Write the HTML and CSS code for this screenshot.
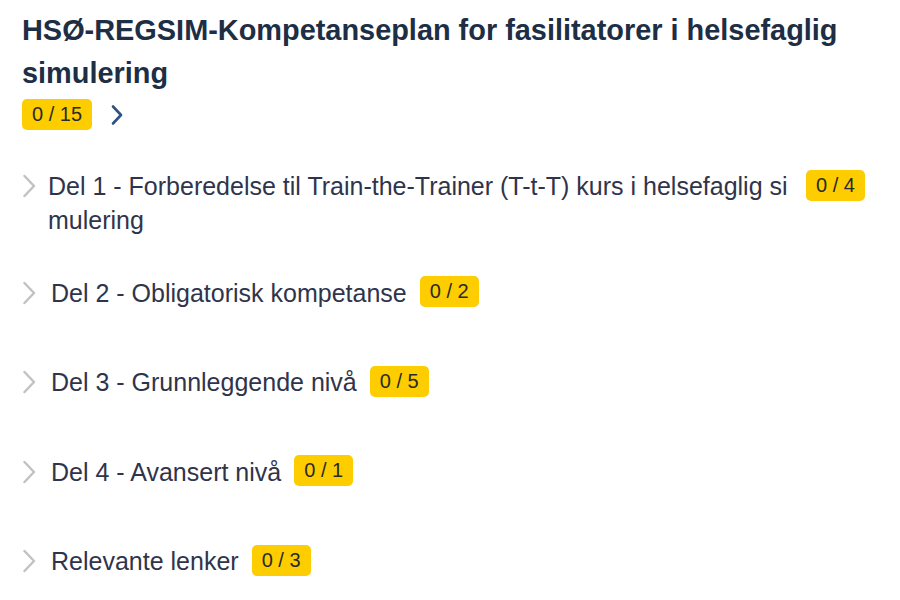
FILE: index.html
```html
<!DOCTYPE html>
<html lang="no">
<head>
    <meta charset="UTF-8">
    <title>Kompetanseplan</title>
    <link rel="stylesheet" href="styles.css">
</head>
<body>
    <div class="plan">
        <h1 class="plan-title">HSØ-REGSIM-Kompetanseplan for fasilitatorer i helsefaglig simulering</h1>
        <div class="plan-progress">
            <span class="badge">0 / 15</span>
            <svg class="open-icon" width="14" height="22" viewBox="0 0 14 22">
                <path d="M3 2.5 L11 11 L3 19.5" fill="none" stroke="#2b5384" stroke-width="2.6" stroke-linecap="round" stroke-linejoin="round"/>
            </svg>
        </div>

        <!-- Parts of the plan -->
        <ul class="parts">
            <li class="part">
                <div class="part-row">
                    <svg class="chevron" width="15" height="24" viewBox="0 0 15 24">
                        <path d="M2.5 2 L12 12 L2.5 22" fill="none" stroke="#c2c2c2" stroke-width="2.5" stroke-linecap="round" stroke-linejoin="round"/>
                    </svg>
                    <span class="part-name part-name-long">Del 1 - Forberedelse til Train-the-Trainer (T-t-T) kurs i helsefaglig simulering</span>
                    <span class="badge">0 / 4</span>
                </div>
            </li>
            <li class="part">
                <div class="part-row">
                    <svg class="chevron" width="15" height="24" viewBox="0 0 15 24">
                        <path d="M2.5 2 L12 12 L2.5 22" fill="none" stroke="#c2c2c2" stroke-width="2.5" stroke-linecap="round" stroke-linejoin="round"/>
                    </svg>
                    <span class="part-name">Del 2 - Obligatorisk kompetanse</span>
                    <span class="badge">0 / 2</span>
                </div>
            </li>
            <li class="part">
                <div class="part-row">
                    <svg class="chevron" width="15" height="24" viewBox="0 0 15 24">
                        <path d="M2.5 2 L12 12 L2.5 22" fill="none" stroke="#c2c2c2" stroke-width="2.5" stroke-linecap="round" stroke-linejoin="round"/>
                    </svg>
                    <span class="part-name">Del 3 - Grunnleggende nivå</span>
                    <span class="badge">0 / 5</span>
                </div>
            </li>
            <li class="part">
                <div class="part-row">
                    <svg class="chevron" width="15" height="24" viewBox="0 0 15 24">
                        <path d="M2.5 2 L12 12 L2.5 22" fill="none" stroke="#c2c2c2" stroke-width="2.5" stroke-linecap="round" stroke-linejoin="round"/>
                    </svg>
                    <span class="part-name">Del 4 - Avansert nivå</span>
                    <span class="badge">0 / 1</span>
                </div>
            </li>
            <li class="part">
                <div class="part-row">
                    <svg class="chevron" width="15" height="24" viewBox="0 0 15 24">
                        <path d="M2.5 2 L12 12 L2.5 22" fill="none" stroke="#c2c2c2" stroke-width="2.5" stroke-linecap="round" stroke-linejoin="round"/>
                    </svg>
                    <span class="part-name">Relevante lenker</span>
                    <span class="badge">0 / 3</span>
                </div>
            </li>
        </ul>
    </div>
</body>
</html>
```

FILE: styles.css
```css
body {
    margin: 0;
    font-family: "Liberation Sans", Arial, sans-serif;
    background: #fff;
}

.plan {
    padding: 8.5px 0 0 22px;
}

.plan-title {
    margin: 0;
    max-width: 860px;
    font-size: 28.9px;
    line-height: 43px;
    font-weight: bold;
    color: #1d2e45;
}

.plan-progress {
    display: flex;
    align-items: center;
    gap: 18px;
    margin-top: 4.5px;
}

.badge {
    display: inline-block;
    height: 31px;
    line-height: 31px;
    padding: 0 10px;
    border-radius: 5px;
    background: #fdcd00;
    color: #2a2a2a;
    font-size: 20px;
    white-space: nowrap;
}

/* List of parts */
.parts {
    list-style: none;
    margin: 39px 0 0;
    padding: 0;
}

.part {
    display: flex;
    align-items: center;
    min-height: 68px;
    margin-bottom: 21.5px;
}

.part-row {
    display: flex;
    align-items: flex-start;
}

.chevron {
    flex: none;
    margin: 5px 14px 0 0;
}

.part-name {
    font-size: 25px;
    line-height: 34px;
    color: #30344b;
}

.part-name-long {
    max-width: 745px;
    word-break: break-all;
    margin-left: -3px;
}

.part-row .badge {
    flex: none;
    margin-left: 13px;
    margin-top: 0.5px;
}
```
